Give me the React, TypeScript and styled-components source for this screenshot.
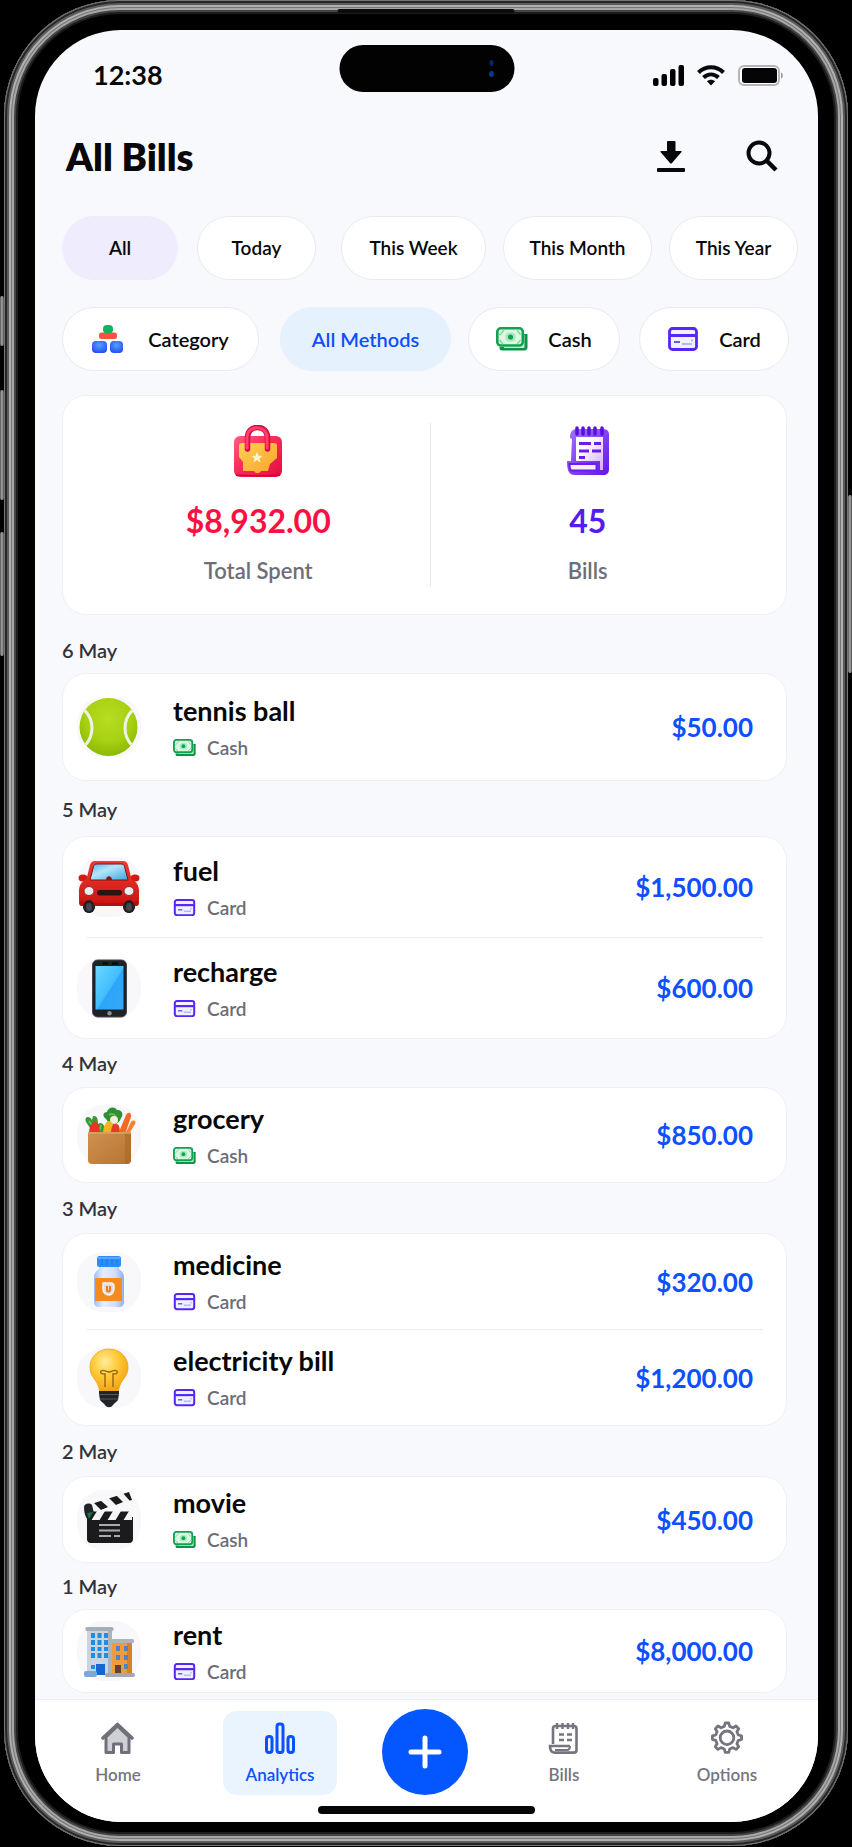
import React from 'react';
import styled, { createGlobalStyle, css } from 'styled-components';

const GlobalStyle = createGlobalStyle`
  * {
    box-sizing: border-box;
  }

  body {
    margin: 0;
    background: #000;
    color: #08080a;
    font-family: Lato, 'Open Sans', sans-serif;
  }

  button {
    padding: 0;
    border: 0;
    background: none;
    color: inherit;
    font: inherit;
    cursor: pointer;
  }

  svg {
    display: block;
    flex: none;
  }
`;

/* ---------- device ---------- */

const Device = styled.div`
  position: relative;
  margin: 0 4px;
  padding: 30px 30px 24px 31px;
  border-radius: 116px;
  background: #000;
  box-shadow:
    inset 0 0 0 1px #777,
    inset 0 0 0 3px #262626,
    inset 0 0 0 5px #5c5c5c,
    inset 0 0 0 7px #b0b0b0,
    inset 0 0 0 8px #777,
    inset 0 0 0 10px #a6a6a6,
    inset 0 0 0 12px #444,
    inset 0 0 0 14px #1c1c1c;
`;

const SideButton = styled.span<{ $side: 'left' | 'right'; $top: number; $height: number }>`
  position: absolute;
  ${({ $side }) => $side}: -4px;
  top: ${({ $top }) => $top}px;
  width: 4px;
  height: ${({ $height }) => $height}px;
  border-radius: 2px;
  background: linear-gradient(90deg, #555, #aaa, #444);
`;

const Speaker = styled.span`
  position: absolute;
  top: 9px;
  left: 50%;
  width: 177px;
  height: 4px;
  border-radius: 2px;
  background: #0c0c0c;
  transform: translateX(-50%);
`;

const Screen = styled.div`
  overflow: hidden;
  border-radius: 86px;
  background: #f8f9fd;
`;

/* ---------- status bar ---------- */

const StatusBar = styled.div`
  position: relative;
  display: flex;
  align-items: center;
  justify-content: space-between;
  height: 90px;
  padding: 0 34px 0 58px;
`;

const Time = styled.span`
  font-size: 27px;
  font-weight: 700;
  line-height: 32px;
`;

const Island = styled.div`
  position: absolute;
  top: 15px;
  left: 50%;
  display: flex;
  align-items: center;
  justify-content: flex-end;
  width: 175px;
  height: 47px;
  padding-right: 19px;
  border-radius: 24px;
  background: #020203;
  transform: translateX(-50%);
`;

const StatusIcons = styled.div`
  display: flex;
  align-items: center;
  gap: 13px;
`;

/* ---------- header ---------- */

const Header = styled.header`
  display: flex;
  align-items: center;
  justify-content: space-between;
  height: 72px;
  padding: 0 32px 0 31px;
`;

const Title = styled.h1`
  margin: 0;
  font-size: 38px;
  font-weight: 800;
  line-height: 44px;
`;

const Actions = styled.div`
  display: flex;
  gap: 43px;
`;

const IconButton = styled.button`
  display: grid;
  place-items: center;
  width: 48px;
  height: 48px;
`;

/* ---------- filters ---------- */

const Filters = styled.div`
  display: grid;
  gap: 27px;
  padding: 24px 20px 24px 27px;
`;

const FilterRow = styled.div<{ $columns: string }>`
  display: grid;
  grid-template-columns: ${({ $columns }) => $columns};
  justify-items: start;
`;

const Chip = styled.button<{ $width: number; $tone?: 'violet' | 'blue' }>`
  display: flex;
  align-items: center;
  justify-content: center;
  width: ${({ $width }) => $width}px;
  height: 64px;
  border: 1px solid #e9eaef;
  border-radius: 32px;
  background: #fff;
  font-size: 19px;
  font-weight: 600;
  line-height: 24px;
  white-space: nowrap;

  ${({ $tone }) =>
    $tone === 'violet' &&
    css`
      border-color: #efecfd;
      background: #efecfd;
    `}

  ${({ $tone }) =>
    $tone === 'blue' &&
    css`
      border-color: #e6f1fe;
      background: #e6f1fe;
      color: #0d50ff;
    `}
`;

const MethodChip = styled(Chip)`
  font-size: 20px;
`;

const ChipIcon = styled.span<{ $gap: number }>`
  margin-right: ${({ $gap }) => $gap}px;
`;

/* ---------- cards ---------- */

const Content = styled.main`
  padding: 0 31px 6px 27px;
`;

const Card = styled.section`
  border: 1px solid #eff0f4;
  border-radius: 24px;
  background: #fff;
`;

const Summary = styled(Card)`
  display: grid;
  grid-template-columns: 345fr 314fr;
  margin-bottom: 12px;
  padding: 27px 42px 27px 23px;
`;

const Stat = styled.div`
  display: flex;
  flex-direction: column;
  align-items: center;
  padding: 2px 0;

  & + & {
    border-left: 1px solid #e9eaef;
  }
`;

const StatValue = styled.strong<{ $color: string }>`
  margin: 24px 0 16px;
  color: ${({ $color }) => $color};
  font-size: 32px;
  font-weight: 700;
  line-height: 40px;
`;

const StatLabel = styled.span`
  color: #6d6e7a;
  font-size: 22px;
  font-weight: 600;
  line-height: 28px;
`;

const DayLabel = styled.h2<{ $height: number }>`
  display: flex;
  align-items: center;
  height: ${({ $height }) => $height}px;
  margin: 0;
  color: #33343a;
  font-size: 20px;
  font-weight: 600;
  line-height: 24px;
`;

const BillList = styled(Card).attrs({ as: 'ul' })`
  margin: 0;
  padding: 0;
  list-style: none;
`;

const BillItem = styled.li`
  & + &::before {
    content: '';
    display: block;
    height: 1px;
    margin: 0 23px 0 24px;
    background: #ecedf1;
  }
`;

const BillRow = styled.div<{ $height: number }>`
  display: flex;
  align-items: center;
  height: ${({ $height }) => $height}px;
  padding: 0 33px 0 14px;
`;

const Tile = styled.span`
  display: block;
  width: 64px;
  height: 60px;
  margin-right: 32px;
  border-radius: 26px;
  background: #f8f8fa;

  svg {
    margin-top: -2px;
  }
`;

const BillText = styled.div`
  flex: 1;
`;

const BillName = styled.div`
  font-size: 27px;
  font-weight: 700;
  line-height: 32px;
`;

const Method = styled.div`
  display: flex;
  align-items: center;
  gap: 11px;
  margin-top: 9px;
  color: #6d6e75;
  font-size: 19px;
  font-weight: 600;
  line-height: 24px;
`;

const Amount = styled.span`
  color: #0d50ff;
  font-size: 26px;
  font-weight: 700;
  line-height: 32px;
`;

/* ---------- tab bar ---------- */

const Footer = styled.footer`
  padding: 9px 0 8px;
  border-top: 1px solid #eff0f4;
  background: #fff;
`;

const TabBar = styled.nav`
  display: grid;
  grid-template-columns: 162fr 162fr 128fr 150fr 176fr;
  align-items: end;
  justify-items: center;
  padding: 0 3px 0 2px;
`;

const Tab = styled.button<{ $active?: boolean }>`
  display: flex;
  flex-direction: column;
  align-items: center;
  gap: 10px;
  width: 114px;
  height: 84px;
  padding-top: 10px;
  border-radius: 14px;
  background: ${({ $active }) => ($active ? '#eaf4fe' : 'transparent')};
  color: ${({ $active }) => ($active ? '#0d50ff' : '#74757e')};
  font-size: 17px;
  font-weight: 600;
  line-height: 20px;
`;

const AddButton = styled.button`
  display: grid;
  place-items: center;
  width: 86px;
  height: 86px;
  border-radius: 50%;
  background: #0456ff;
`;

const HomeIndicator = styled.div`
  width: 217px;
  height: 8px;
  margin: 11px auto 0;
  border-radius: 4px;
  background: #050506;
`;

/* ---------- small icons ---------- */

const CategoryIcon = () => (
  <svg width="32" height="28" viewBox="0 0 32 28">
    <defs>
      <radialGradient id="blueDot" cx="0.5" cy="0.35" r="0.7">
        <stop offset="0" stopColor="#5ba0ff" />
        <stop offset="1" stopColor="#1d4bf2" />
      </radialGradient>
    </defs>
    <rect x="7" y="7.500" width="18" height="6.500" rx="2.500" fill="#fb5340" />
    <rect x="11" y="0" width="10" height="8.500" rx="4" fill="#13b262" />
    <rect x="0" y="16" width="15" height="12" rx="4" fill="url(#blueDot)" />
    <rect x="18" y="16" width="13" height="12" rx="4" fill="url(#blueDot)" />
  </svg>
);

const CashIcon = ({ size = 32 }: { size?: number }) => (
  <svg width={size} height={size * 0.75} viewBox="0 0 32 24">
    <path d="M28 7h3.500v13c0 2-1 3.500-3 3.500H6c-2 0-2.500-1-2.500-3.500h24.500z" fill="#0d9347" />
    <path d="M27 8h1.500v11.500c0 1-.5 1.500-1.500 1.500H8V19.500h17c1.500 0 2-1 2-2z" fill="#c5f0d2" />
    <rect x="1.300" y="1.300" width="25.500" height="17.200" rx="3.500" fill="#d9f9e2" stroke="#12a150" strokeWidth="2.600" />
    <path d="M3 7.500h1.500L8 3M24.500 7.500L21 3M3.500 13L7 17M24.500 13L21 17" stroke="#7fd79d" strokeWidth="1.300" fill="none" />
    <rect x="9.500" y="5.500" width="10" height="9" rx="4" fill="#a9e9bd" />
    <circle cx="14.500" cy="10" r="2.600" fill="#12a150" />
  </svg>
);

const CardIcon = ({ size = 32 }: { size?: number }) => (
  <svg width={size} height={size * 0.75} viewBox="0 0 32 24">
    <rect x="2.500" y="1.500" width="27" height="21" rx="3" fill="#f1f0ff" stroke="#5526f5" strokeWidth="2.800" />
    <path d="M3 8.500h26" stroke="#5526f5" strokeWidth="3" />
    <path d="M7 15h6" stroke="#6a58e8" strokeWidth="2" />
    <path d="M15 17h10M24 13.500h2" stroke="#aebcf5" strokeWidth="2" />
  </svg>
);

const SignalIcon = () => (
  <svg width="31" height="21" viewBox="0 0 31 21">
    <rect x="0" y="13" width="5.500" height="8" rx="2" />
    <rect x="8.500" y="9" width="5.500" height="12" rx="2" />
    <rect x="17" y="4" width="5.500" height="17" rx="2" />
    <rect x="25.500" y="0" width="5.500" height="21" rx="2" />
  </svg>
);

const WifiIcon = () => (
  <svg width="28" height="21" viewBox="0 0 28 21" fill="none" stroke="#08080a" strokeWidth="4">
    <path d="M1.500 7.500C8.500.5 19.500.5 26.500 7.500" />
    <path d="M6.500 12.500c4.500-4 10.500-4 15 0" />
    <path d="M14 20.500l-4-4.200c2.400-2 5.600-2 8 0z" fill="#08080a" stroke="none" />
  </svg>
);

const BatteryIcon = () => (
  <svg width="46" height="21" viewBox="0 0 46 21">
    <rect x="1" y="1" width="40" height="19" rx="5" fill="#fff" stroke="#b5b5b8" strokeWidth="2" />
    <rect x="4" y="3" width="35" height="15" rx="3" fill="#050506" />
    <path d="M43 7.500c2.500.6 2.500 5.400 0 6z" fill="#9b9b9f" />
  </svg>
);

const DownloadIcon = () => (
  <svg width="28" height="32" viewBox="0 0 28 32" fill="#08080a">
    <path d="M11 1h6.500q1 0 1 1v9H24q1 0 .5 1L15 23q-1 1-2 0L3.500 12q-.5-1 .5-1h6V2q0-1 1-1z" />
    <rect x="0" y="28" width="28" height="4" rx="1" />
  </svg>
);

const SearchIcon = () => (
  <svg width="32" height="32" viewBox="0 0 32 32" fill="none" stroke="#08080a" strokeWidth="4">
    <circle cx="13" cy="13" r="10.500" />
    <path d="M20.500 20.500L30 30" strokeWidth="4.500" />
  </svg>
);

const HomeIcon = () => (
  <svg width="34" height="34" viewBox="0 0 34 34" stroke="#6f7079" strokeLinejoin="round">
    <path d="M5 16v15.500h7.500v-8.500h8v8.500H28V16L16.500 5z" fill="#cfd0d6" strokeWidth="3" />
    <path d="M2 17L16.500 3.500 31 17" fill="none" strokeWidth="3.600" strokeLinecap="round" />
  </svg>
);

const AnalyticsIcon = () => (
  <svg width="34" height="34" viewBox="0 0 34 34" fill="none" stroke="#0d50ff" strokeWidth="3">
    <rect x="3.500" y="15.500" width="5.500" height="16" rx="2.500" />
    <rect x="14" y="3" width="6" height="28.500" rx="2.500" />
    <rect x="25" y="15.500" width="5.500" height="16" rx="2.500" />
  </svg>
);

const ReceiptIcon = () => (
  <svg width="34" height="34" viewBox="0 0 34 34" fill="none" stroke="#74757e" strokeWidth="2.600">
    <path d="M6 23V7.500C6 5.500 7 5 8.500 5H27c1.500 0 2.500 1 2.500 2.500V29c0 1.600-1 2.600-2.500 2.600H7.500C4.500 31.500 3 29.500 3 25h20" />
    <path d="M8 29h12c2 0 3-1.500 3-4" strokeWidth="2" />
    <path d="M10 2v6M15.500 2v6M21 2v6M26 2v6" strokeWidth="2.400" />
    <path d="M12 13.500h5M20 13.500h5M12 19h5M20 19h5" strokeWidth="2.400" />
  </svg>
);

// eight rounded teeth around a ring
const GearIcon = () => (
  <svg width="34" height="34" viewBox="0 0 34 34" fill="none" stroke="#74757e" strokeWidth="2.800" strokeLinejoin="round">
    <path d="M14.300 5.400L15.200 2h3.600l.9 3.400 3.300 1.400 3-1.800 2.700 2.700-1.800 3 1.400 3.300 3.300.9v3.600l-3.300.9-1.400 3.300 1.800 3-2.700 2.700-3-1.800-3.300 1.400-.9 3.400h-3.600l-.9-3.400-3.300-1.400-3 1.800-2.700-2.700 1.800-3-1.400-3.300-3.300-.9v-3.600l3.300-.9 1.400-3.300-1.800-3L8 5l3 1.800z" />
    <circle cx="17" cy="16.800" r="6.800" />
  </svg>
);

const PlusIcon = () => (
  <svg width="34" height="34" viewBox="0 0 34 34" stroke="#fff" strokeWidth="5" strokeLinecap="round">
    <path d="M17 3v28M3 17h28" />
  </svg>
);

/* ---------- illustrations ---------- */

const BagIcon = () => (
  <svg width="50" height="52" viewBox="0 0 50 52">
    <defs>
      <linearGradient id="bagRed" x1="0" y1="0" x2="1" y2="1">
        <stop offset="0" stopColor="#ff5f80" />
        <stop offset="0.4" stopColor="#fb2f5b" />
        <stop offset="1" stopColor="#e20c40" />
      </linearGradient>
      <linearGradient id="bagGold" x1="0" y1="0" x2="1" y2="1">
        <stop offset="0" stopColor="#ffd152" />
        <stop offset="1" stopColor="#fba32b" />
      </linearGradient>
    </defs>
    <rect x="1" y="11" width="48" height="41" rx="6" fill="url(#bagRed)" />
    <path d="M3 50c8 1 36 1 44 0" stroke="#c90837" strokeWidth="1.500" fill="none" />
    <path d="M9 18h32c2 0 3 1 3 3v12l-7 6-2 7H28c-2 3-5 3-7 0H10V37l-4-5V21c0-2 1-3 3-3z" fill="url(#bagGold)" />
    <path d="M14.500 24V12.500C14.500-1 34.500-1 34.500 12.500V24" fill="none" stroke="#d90b42" strokeWidth="5.500" strokeLinecap="round" />
    <path d="M14 23V12.500C14-.5 34-.5 34 12.500V23" fill="none" stroke="#ff416b" strokeWidth="3" strokeLinecap="round" />
    <path d="M24 27l1.500 3.800 4 .2-3.200 2.400 1.200 4-3.500-2.300-3.500 2.300 1.200-4-3.200-2.400 4-.2z" fill="#fff4cf" />
  </svg>
);

const BillsIcon = () => (
  <svg width="44" height="52" viewBox="0 0 44 52">
    <defs>
      <linearGradient id="billViolet" x1="0" y1="0" x2="1" y2="1">
        <stop offset="0" stopColor="#a274fb" />
        <stop offset="1" stopColor="#6414ec" />
      </linearGradient>
      <linearGradient id="billPaper" x1="0" y1="0" x2="1" y2="1">
        <stop offset="0.3" stopColor="#fff" />
        <stop offset="1" stopColor="#d3a9fb" />
      </linearGradient>
    </defs>
    <path d="M4 13c0-6 2-9 7-9h26c4 0 6 2 6 6v34c0 4-2 6-6 6H9c-6 0-8-4-8-14h4l1-22z" fill="url(#billViolet)" />
    <path d="M10 12h27v33h-3V36H10z" fill="url(#billPaper)" />
    <path d="M3.500 39h27v6.500h-25C4 45 3.500 42 3.500 39z" fill="#f5ecff" stroke="#6a1df0" strokeWidth="2" />
    <path d="M11 3v6M17 3v6M23 3v6M29 3v6M36 3v6" stroke="#5a0fdc" strokeWidth="3.500" strokeLinecap="round" />
    <path d="M13 18.500h12M28 18.500h7M13 26h10M26 26h9M13 32.500h6" stroke="#6a1df0" strokeWidth="3" />
  </svg>
);

const TennisBall = () => (
  <svg width="64" height="64" viewBox="0 0 64 64">
    <defs>
      <radialGradient id="ball" cx="0.5" cy="0.35" r="0.65">
        <stop offset="0" stopColor="#b6de22" />
        <stop offset="0.6" stopColor="#a8d112" />
        <stop offset="1" stopColor="#8db806" />
      </radialGradient>
      <clipPath id="ballClip">
        <circle cx="31.500" cy="32" r="29" />
      </clipPath>
    </defs>
    <circle cx="31.500" cy="32" r="29" fill="url(#ball)" />
    <g clipPath="url(#ballClip)" fill="none" stroke="#eef3e4" strokeWidth="3">
      <circle cx="-10" cy="33" r="25" />
      <circle cx="73" cy="33" r="25" />
    </g>
  </svg>
);

const CarPicture = () => (
  <svg width="64" height="64" viewBox="0 0 64 64">
    <defs>
      <linearGradient id="carRed" x1="0" y1="0" x2="0" y2="1">
        <stop offset="0" stopColor="#f03a30" />
        <stop offset="1" stopColor="#c9130f" />
      </linearGradient>
      <linearGradient id="glass" x1="0" y1="0" x2="1" y2="1">
        <stop offset="0" stopColor="#4fb8ec" />
        <stop offset="0.4" stopColor="#b5e5fa" />
        <stop offset="1" stopColor="#38a6e2" />
      </linearGradient>
    </defs>
    <rect x="6" y="42" width="12" height="16" rx="6" fill="#202124" />
    <rect x="46" y="42" width="12" height="16" rx="6" fill="#202124" />
    <ellipse cx="6" cy="23" rx="4.500" ry="3.500" fill="#d21a16" />
    <ellipse cx="58" cy="23" rx="4.500" ry="3.500" fill="#d21a16" />
    <path d="M18 6h28c3 0 4 1.500 5 4l3.500 14C60 27 62 31 62 36v12c0 2-1 3-3 3H5c-2 0-3-1-3-3V36c0-5 2-9 7.500-12L13 10c1-2.500 2-4 5-4z" fill="url(#carRed)" />
    <path d="M20 9h24c2 0 3 1 3.500 2.500L51 25H13l3.500-13.500C17 10 18 9 20 9z" fill="url(#glass)" stroke="#7a1512" strokeWidth="1" />
    <path d="M29 25c0-5 6-5 6 0z" fill="#7c1c18" />
    <path d="M3 46c16 3 42 3 58 0v3c0 1-1 2-3 2H6c-2 0-3-1-3-2z" fill="#b30f0c" />
    <ellipse cx="12" cy="51.500" rx="5.500" ry="6.500" fill="#202124" />
    <ellipse cx="52" cy="51.500" rx="5.500" ry="6.500" fill="#202124" />
    <ellipse cx="12" cy="52" rx="3" ry="4" fill="#45474c" />
    <ellipse cx="52" cy="52" rx="3" ry="4" fill="#45474c" />
    <ellipse cx="12" cy="36" rx="5" ry="4.500" fill="#e8edf0" stroke="#a3201c" />
    <ellipse cx="52" cy="36" rx="5" ry="4.500" fill="#e8edf0" stroke="#a3201c" />
    <rect x="20" y="35" width="25" height="5.500" rx="2.700" fill="#2b1415" />
  </svg>
);

const PhonePicture = () => (
  <svg width="64" height="64" viewBox="0 0 64 64">
    <defs>
      <linearGradient id="phoneScreen" x1="0" y1="0" x2="1" y2="1">
        <stop offset="0" stopColor="#6bd8ff" />
        <stop offset="0.52" stopColor="#40bcfd" />
        <stop offset="0.53" stopColor="#2ba6fa" />
        <stop offset="1" stopColor="#35a9f8" />
      </linearGradient>
    </defs>
    <rect x="15.500" y="4" width="34" height="57" rx="5" fill="#1e2125" stroke="#44484d" />
    <rect x="18.500" y="10" width="28" height="43.500" fill="url(#phoneScreen)" />
    <path d="M26 7.500h5M35 7.500h6" stroke="#050607" strokeWidth="2" />
    <circle cx="32.500" cy="57.200" r="2.200" fill="#8b9096" />
  </svg>
);

const GroceryPicture = () => (
  <svg width="64" height="64" viewBox="0 0 64 64">
    <defs>
      <linearGradient id="paperBag" x1="0" y1="0" x2="1" y2="1">
        <stop offset="0" stopColor="#cf9152" />
        <stop offset="1" stopColor="#b67430" />
      </linearGradient>
    </defs>
    <path d="M17 31L9 19c-2-5 3-7 6-2l1-4c5-1 5 5 5 8 3-3 7 1 7 5l-3 8z" fill="#3a9838" />
    <path d="M12 18l9 12M24 22l-2 8" stroke="#7cc85b" strokeWidth="1.500" />
    <path d="M29 16c-4-3-3-7 1-7 1-5 8-6 10-2 5-1 7 5 4 8-1 4-4 5-6 7l-4 1z" fill="#2f8f35" />
    <path d="M32 12c3-2 5-1 7 2" stroke="#6dbb50" strokeWidth="2" fill="none" />
    <circle cx="37" cy="17" r="4" fill="#f4ecd8" />
    <path d="M12 31c0-8 3-12 6-12s5 5 5 12z" fill="#ea3424" />
    <path d="M26 31c0-7 3-13 6-13s6 6 6 13z" fill="#f7b21c" />
    <path d="M34 31c0-7 2-11 5-10 3 0 4 3 4 10z" fill="#e53c24" />
    <path d="M41 31l8-19c2-4 6-2 5 2l-6 17z" fill="#f46a23" />
    <path d="M48 31l6-12c2-3 6-1 4 2l-6 10z" fill="#f9812f" />
    <path d="M11 29h43v28c0 2-1 4-4 4H15c-3 0-4-2-4-4z" fill="url(#paperBag)" />
    <path d="M48 29h6v28c0 2-1 4-4 4h-2z" fill="#a9682a" opacity="0.6" />
    <path d="M11 30h43" stroke="#dca469" strokeWidth="1.500" />
  </svg>
);

const MedicinePicture = () => (
  <svg width="64" height="64" viewBox="0 0 64 64">
    <defs>
      <linearGradient id="bottle" x1="0" y1="0" x2="1" y2="0">
        <stop offset="0" stopColor="#9dbcf4" />
        <stop offset="0.3" stopColor="#e6eefd" />
        <stop offset="0.7" stopColor="#d3dffa" />
        <stop offset="1" stopColor="#8fb0f2" />
      </linearGradient>
    </defs>
    <path d="M22 16h20v3c4 3 5 5 5 9v24c0 3-2 5-5 5H22c-3 0-5-2-5-5V28c0-4 1-6 5-9z" fill="url(#bottle)" />
    <rect x="20" y="6" width="24" height="11" rx="2.500" fill="#2d8df6" />
    <path d="M25 8v7M30 8v7M35 8v7M40 8v7" stroke="#1e78e3" strokeWidth="1" />
    <path d="M21 8h22" stroke="#67b3ff" strokeWidth="1.500" />
    <rect x="18" y="28" width="27" height="23" fill="#f68a1c" />
    <path d="M26 33h8c3 0 3 2 3 5 0 4-2 7-5 7s-6-2-6-6z" fill="#dcdfe6" stroke="#f3f4f8" strokeWidth="1.500" />
    <path d="M30 36v4c0 2 3 2 3 0v-4" fill="none" stroke="#e97c12" strokeWidth="2" />
  </svg>
);

const BulbPicture = () => (
  <svg width="64" height="64" viewBox="0 0 64 64">
    <defs>
      <radialGradient id="bulb" cx="0.4" cy="0.3" r="0.75">
        <stop offset="0" stopColor="#ffec9a" />
        <stop offset="0.45" stopColor="#ffca37" />
        <stop offset="1" stopColor="#f29d0c" />
      </radialGradient>
    </defs>
    <path d="M32 3c11 0 19 8 19 18 0 8-4 11-7 16-2 4-2 6-3 9H23c-1-3-1-5-3-9-3-5-7-8-7-16C13 11 21 3 32 3z" fill="url(#bulb)" stroke="#eda51a" strokeWidth="0.800" />
    <path d="M28 41V28c-4 0-5-1-4-3 3-2 5 1 8 1s5-3 8-1c1 2 0 3-4 3v13" fill="none" stroke="#96650f" strokeWidth="1.400" />
    <path d="M22 45h20v3l-1 6c-1 2-4 3-5 5-2 3-6 3-8 0-1-2-4-3-5-5l-1-6z" fill="#232427" />
    <path d="M22 48.500h20M23 53h18" stroke="#55575c" strokeWidth="1.200" />
  </svg>
);

const MoviePicture = () => (
  <svg width="64" height="64" viewBox="0 0 64 64">
    <defs>
      <clipPath id="clapTop">
        <path d="M8 18L52 4l3 8L12 26z" />
      </clipPath>
      <clipPath id="clapBottom">
        <path d="M11 23.500h44V32H11z" />
      </clipPath>
    </defs>
    <g clipPath="url(#clapTop)">
      <path d="M0 0h64v64H0z" fill="#f4f4f4" />
      <path d="M16 14l8 8 7-3-9-8zM30 8l9 9 7-3-9-9zM44 3l9 10 8-3-9-9z" fill="#1a1a1c" />
    </g>
    <path d="M10 29h46v22c0 2-1 4-4 4H14c-3 0-4-2-4-4z" fill="#1b1b1d" />
    <g clipPath="url(#clapBottom)">
      <path d="M0 0h64v64H0z" fill="#f4f4f4" />
      <path d="M11 23l-4 10h7l6-10zM28 23l-6 10h8l6-10zM44 23l-6 10h8l6-10z" fill="#1a1a1c" />
    </g>
    <path d="M7 19c0-3 5-5 8-2l2 8-6 7c-3-3-4-8-4-13z" fill="#222326" />
    <path d="M10 25l6-1-4 7z" fill="#12744a" />
    <path d="M22 37h21M22 42.500h21M22 48h12M37 48h6" stroke="#aaabae" strokeWidth="2" />
  </svg>
);

const BuildingPicture = () => (
  <svg width="64" height="64" viewBox="0 0 64 64">
    <path d="M35 23h20v33H35z" fill="#f09a3e" />
    <path d="M50 23h5v33h-5z" fill="#d98128" />
    <rect x="34" y="20" width="23" height="4" rx="1.500" fill="#aeb4bd" />
    <path d="M10 11h25v45H10z" fill="#cbd3dd" />
    <path d="M31 11h4v45h-4z" fill="#aab4c1" />
    <rect x="8.500" y="8" width="28" height="4" rx="1.500" fill="#a5adb8" />
    <path d="M14 14h4v5h-4zM20.500 14h4v5h-4zM27 14h4v5h-4zM14 21h4v5h-4zM20.500 21h4v5h-4zM27 21h4v5h-4zM14 28h4v4h-4zM20.500 28h4v4h-4zM27 28h4v4h-4zM14 34h4v5h-4zM20.500 34h4v5h-4zM27 34h4v5h-4zM14 46h4v4h-4z" fill="#1b8ee8" />
    <path d="M39 27h4v5h-4zM47 27h4v5h-4zM39 36h4v5h-4zM47 36h4v5h-4zM47 45h4v5h-4z" fill="#4d83c9" />
    <path d="M19 45h9v11h-9z" fill="#1666d3" />
    <path d="M38 46h6v10h-6z" fill="#5b4338" />
    <rect x="7" y="52" width="13" height="6" rx="2" fill="#7da7d9" />
    <rect x="28" y="54" width="30" height="4" rx="2" fill="#a4a8af" />
  </svg>
);

/* ---------- data ---------- */

type Bill = {
  name: string;
  method: 'Cash' | 'Card';
  amount: string;
  Picture: React.FC;
};

type Day = {
  label: string;
  labelHeight: number;
  rowHeight: number;
  bills: Bill[];
};

const days: Day[] = [
  {
    label: '6 May',
    labelHeight: 46,
    rowHeight: 106,
    bills: [{ name: 'tennis ball', method: 'Cash', amount: '$50.00', Picture: TennisBall }],
  },
  {
    label: '5 May',
    labelHeight: 55,
    rowHeight: 100,
    bills: [
      { name: 'fuel', method: 'Card', amount: '$1,500.00', Picture: CarPicture },
      { name: 'recharge', method: 'Card', amount: '$600.00', Picture: PhonePicture },
    ],
  },
  {
    label: '4 May',
    labelHeight: 48,
    rowHeight: 94,
    bills: [{ name: 'grocery', method: 'Cash', amount: '$850.00', Picture: GroceryPicture }],
  },
  {
    label: '3 May',
    labelHeight: 50,
    rowHeight: 95,
    bills: [
      { name: 'medicine', method: 'Card', amount: '$320.00', Picture: MedicinePicture },
      { name: 'electricity bill', method: 'Card', amount: '$1,200.00', Picture: BulbPicture },
    ],
  },
  {
    label: '2 May',
    labelHeight: 50,
    rowHeight: 85,
    bills: [{ name: 'movie', method: 'Cash', amount: '$450.00', Picture: MoviePicture }],
  },
  {
    label: '1 May',
    labelHeight: 46,
    rowHeight: 82,
    bills: [{ name: 'rent', method: 'Card', amount: '$8,000.00', Picture: BuildingPicture }],
  },
];

const periods = [
  { label: 'All', width: 116 },
  { label: 'Today', width: 119 },
  { label: 'This Week', width: 145 },
  { label: 'This Month', width: 149 },
  { label: 'This Year', width: 129 },
];

const DaySection: React.FC<{ day: Day }> = ({ day }) => (
  <>
    <DayLabel $height={day.labelHeight}>{day.label}</DayLabel>
    <BillList>
      {day.bills.map(({ name, method, amount, Picture }) => (
        <BillItem key={name}>
          <BillRow $height={day.rowHeight}>
            <Tile>
              <Picture />
            </Tile>
            <BillText>
              <BillName>{name}</BillName>
              <Method>
                {method === 'Cash' ? <CashIcon size={23} /> : <CardIcon size={23} />}
                {method}
              </Method>
            </BillText>
            <Amount>{amount}</Amount>
          </BillRow>
        </BillItem>
      ))}
    </BillList>
  </>
);

const App: React.FC = () => {
  const [period, setPeriod] = React.useState('All');

  return (
    <>
      <GlobalStyle />
      <Device>
        <SideButton $side="left" $top={296} $height={50} />
        <SideButton $side="left" $top={390} $height={110} />
        <SideButton $side="left" $top={532} $height={124} />
        <SideButton $side="right" $top={495} $height={178} />
        <Speaker />
        <Screen>
          <StatusBar>
            <Time>12:38</Time>
            <Island>
              <svg width="8" height="24" viewBox="0 0 8 24" fill="#0a3690">
                <ellipse cx="4" cy="6" rx="2" ry="3" opacity="0.7" />
                <ellipse cx="4" cy="17" rx="2.500" ry="3" />
              </svg>
            </Island>
            <StatusIcons>
              <SignalIcon />
              <WifiIcon />
              <BatteryIcon />
            </StatusIcons>
          </StatusBar>

          <Header>
            <Title>All Bills</Title>
            <Actions>
              <IconButton aria-label="Download">
                <DownloadIcon />
              </IconButton>
              <IconButton aria-label="Search">
                <SearchIcon />
              </IconButton>
            </Actions>
          </Header>

          <Filters>
            <FilterRow $columns="135fr 144fr 162fr 166fr 129fr">
              {periods.map(({ label, width }) => (
                <Chip
                  key={label}
                  $width={width}
                  $tone={label === period ? 'violet' : undefined}
                  onClick={() => setPeriod(label)}
                >
                  {label}
                </Chip>
              ))}
            </FilterRow>
            <FilterRow $columns="218fr 188fr 171fr 159fr">
              <MethodChip $width={197}>
                <ChipIcon $gap={24}>
                  <CategoryIcon />
                </ChipIcon>
                Category
              </MethodChip>
              <MethodChip $width={171} $tone="blue">
                All Methods
              </MethodChip>
              <MethodChip $width={152}>
                <ChipIcon $gap={20}>
                  <CashIcon />
                </ChipIcon>
                Cash
              </MethodChip>
              <MethodChip $width={150}>
                <ChipIcon $gap={20}>
                  <CardIcon />
                </ChipIcon>
                Card
              </MethodChip>
            </FilterRow>
          </Filters>

          <Content>
            <Summary>
              <Stat>
                <BagIcon />
                <StatValue $color="#fb1044">$8,932.00</StatValue>
                <StatLabel>Total Spent</StatLabel>
              </Stat>
              <Stat>
                <BillsIcon />
                <StatValue $color="#541bf2">45</StatValue>
                <StatLabel>Bills</StatLabel>
              </Stat>
            </Summary>
            {days.map((day) => (
              <DaySection key={day.label} day={day} />
            ))}
          </Content>

          <Footer>
            <TabBar>
              <Tab>
                <HomeIcon />
                Home
              </Tab>
              <Tab $active>
                <AnalyticsIcon />
                Analytics
              </Tab>
              <AddButton aria-label="Add bill">
                <PlusIcon />
              </AddButton>
              <Tab>
                <ReceiptIcon />
                Bills
              </Tab>
              <Tab>
                <GearIcon />
                Options
              </Tab>
            </TabBar>
            <HomeIndicator />
          </Footer>
        </Screen>
      </Device>
    </>
  );
};

export default App;
